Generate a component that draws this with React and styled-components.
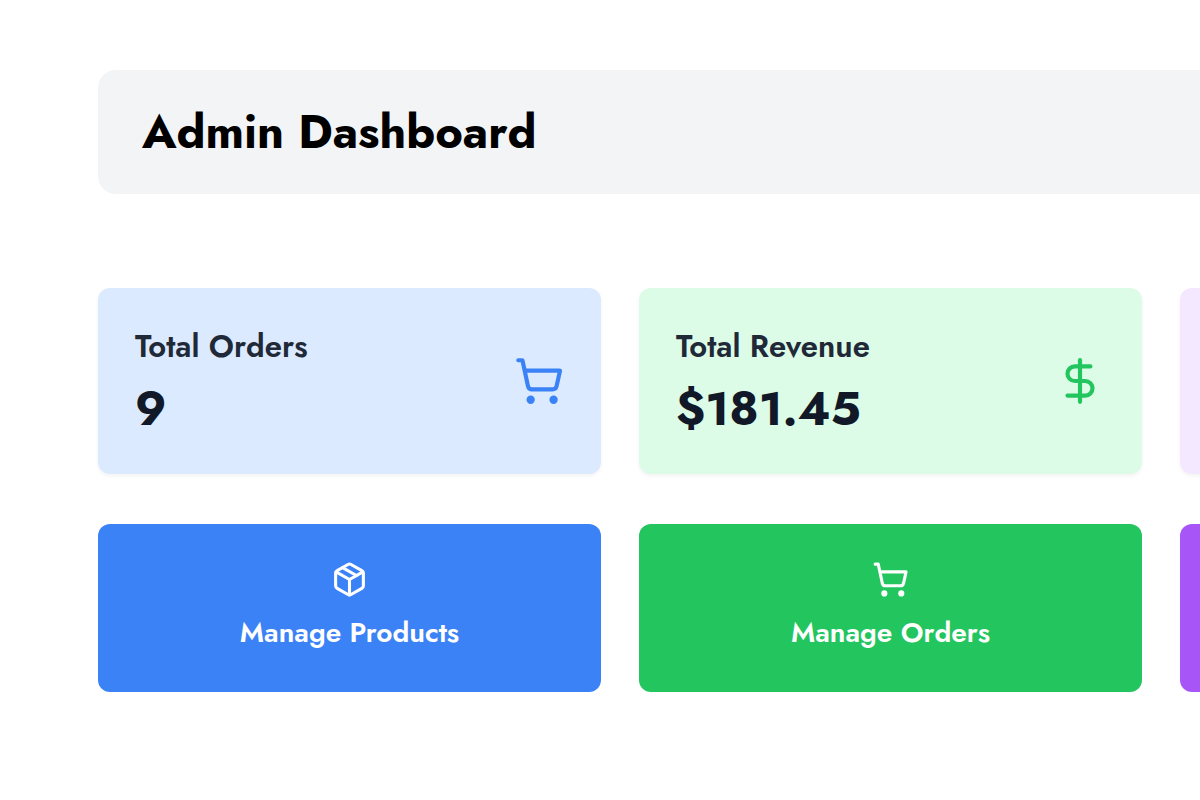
import { DollarSign, Package, ShoppingCart } from "lucide-react";
import styled, { createGlobalStyle } from "styled-components";

const GlobalStyle = createGlobalStyle`
  * {
    box-sizing: border-box;
  }

  body {
    margin: 0;
    background-color: #fff;
    font-family: Jost, Lato, sans-serif;
  }
`;

const Page = styled.main`
  padding: 70px 0 70px 98px;
  overflow-x: hidden;
`;

const Header = styled.header`
  background-color: #f3f4f6;
  border-radius: 18px 0 0 18px;
  padding: 32px 44px;
  margin-bottom: 94px;
`;

const Title = styled.h1`
  margin: 0;
  color: #000;
  font-size: 47px;
  font-weight: 700;
  line-height: 60px;
`;

const CardGrid = styled.div`
  display: grid;
  grid-template-columns: repeat(3, calc(42vw - 1px));
  gap: 38px;
  margin-bottom: 50px;
`;

const StatCard = styled.section`
  display: flex;
  align-items: center;
  justify-content: space-between;
  min-height: 186px;
  padding: 37px;
  border-radius: 12px;
  background-color: ${props => props.$background};
  color: ${props => props.$accent};
  box-shadow: 0 2px 4px rgba(0, 0, 0, 0.05);
`;

const StatLabel = styled.h2`
  margin: 0 0 12px;
  color: #1f2937;
  font-size: 31px;
  font-weight: 600;
  line-height: 44px;
`;

const StatValue = styled.p`
  margin: 0;
  color: #111827;
  font-size: 47px;
  font-weight: 700;
  line-height: 56px;
`;

const ActionButton = styled.button`
  display: flex;
  flex-direction: column;
  align-items: center;
  justify-content: center;
  gap: 13px;
  min-height: 168px;
  padding: 37px;
  border: none;
  border-radius: 12px;
  background-color: ${props => props.$background};
  color: #fff;
  font-family: inherit;
  font-size: 28px;
  font-weight: 600;
  line-height: 44px;
  cursor: pointer;
`;

const stats = [
  {
    label: "Total Orders",
    value: "9",
    Icon: ShoppingCart,
    background: "#dbeafe",
    accent: "#3b82f6",
  },
  {
    label: "Total Revenue",
    value: "$181.45",
    Icon: DollarSign,
    background: "#dcfce7",
    accent: "#22c55e",
  },
  { background: "#f3e8ff", accent: "#a855f7" },
];

const actions = [
  { label: "Manage Products", Icon: Package, background: "#3b82f6" },
  { label: "Manage Orders", Icon: ShoppingCart, background: "#22c55e" },
  { background: "#a855f7" },
];

function App() {
  return (
    <>
      <GlobalStyle />
      <Page>
        <Header>
          <Title>Admin Dashboard</Title>
        </Header>
        <CardGrid>
          {stats.map(({ label, value, Icon, background, accent }) => (
            <StatCard key={background} $background={background} $accent={accent}>
              {label && (
                <div>
                  <StatLabel>{label}</StatLabel>
                  <StatValue>{value}</StatValue>
                </div>
              )}
              {Icon && <Icon size={50} />}
            </StatCard>
          ))}
        </CardGrid>
        <CardGrid>
          {actions.map(({ label, Icon, background }) => (
            <ActionButton key={background} type="button" $background={background}>
              {Icon && <Icon size={37} />}
              {label}
            </ActionButton>
          ))}
        </CardGrid>
      </Page>
    </>
  );
}

export default App;
